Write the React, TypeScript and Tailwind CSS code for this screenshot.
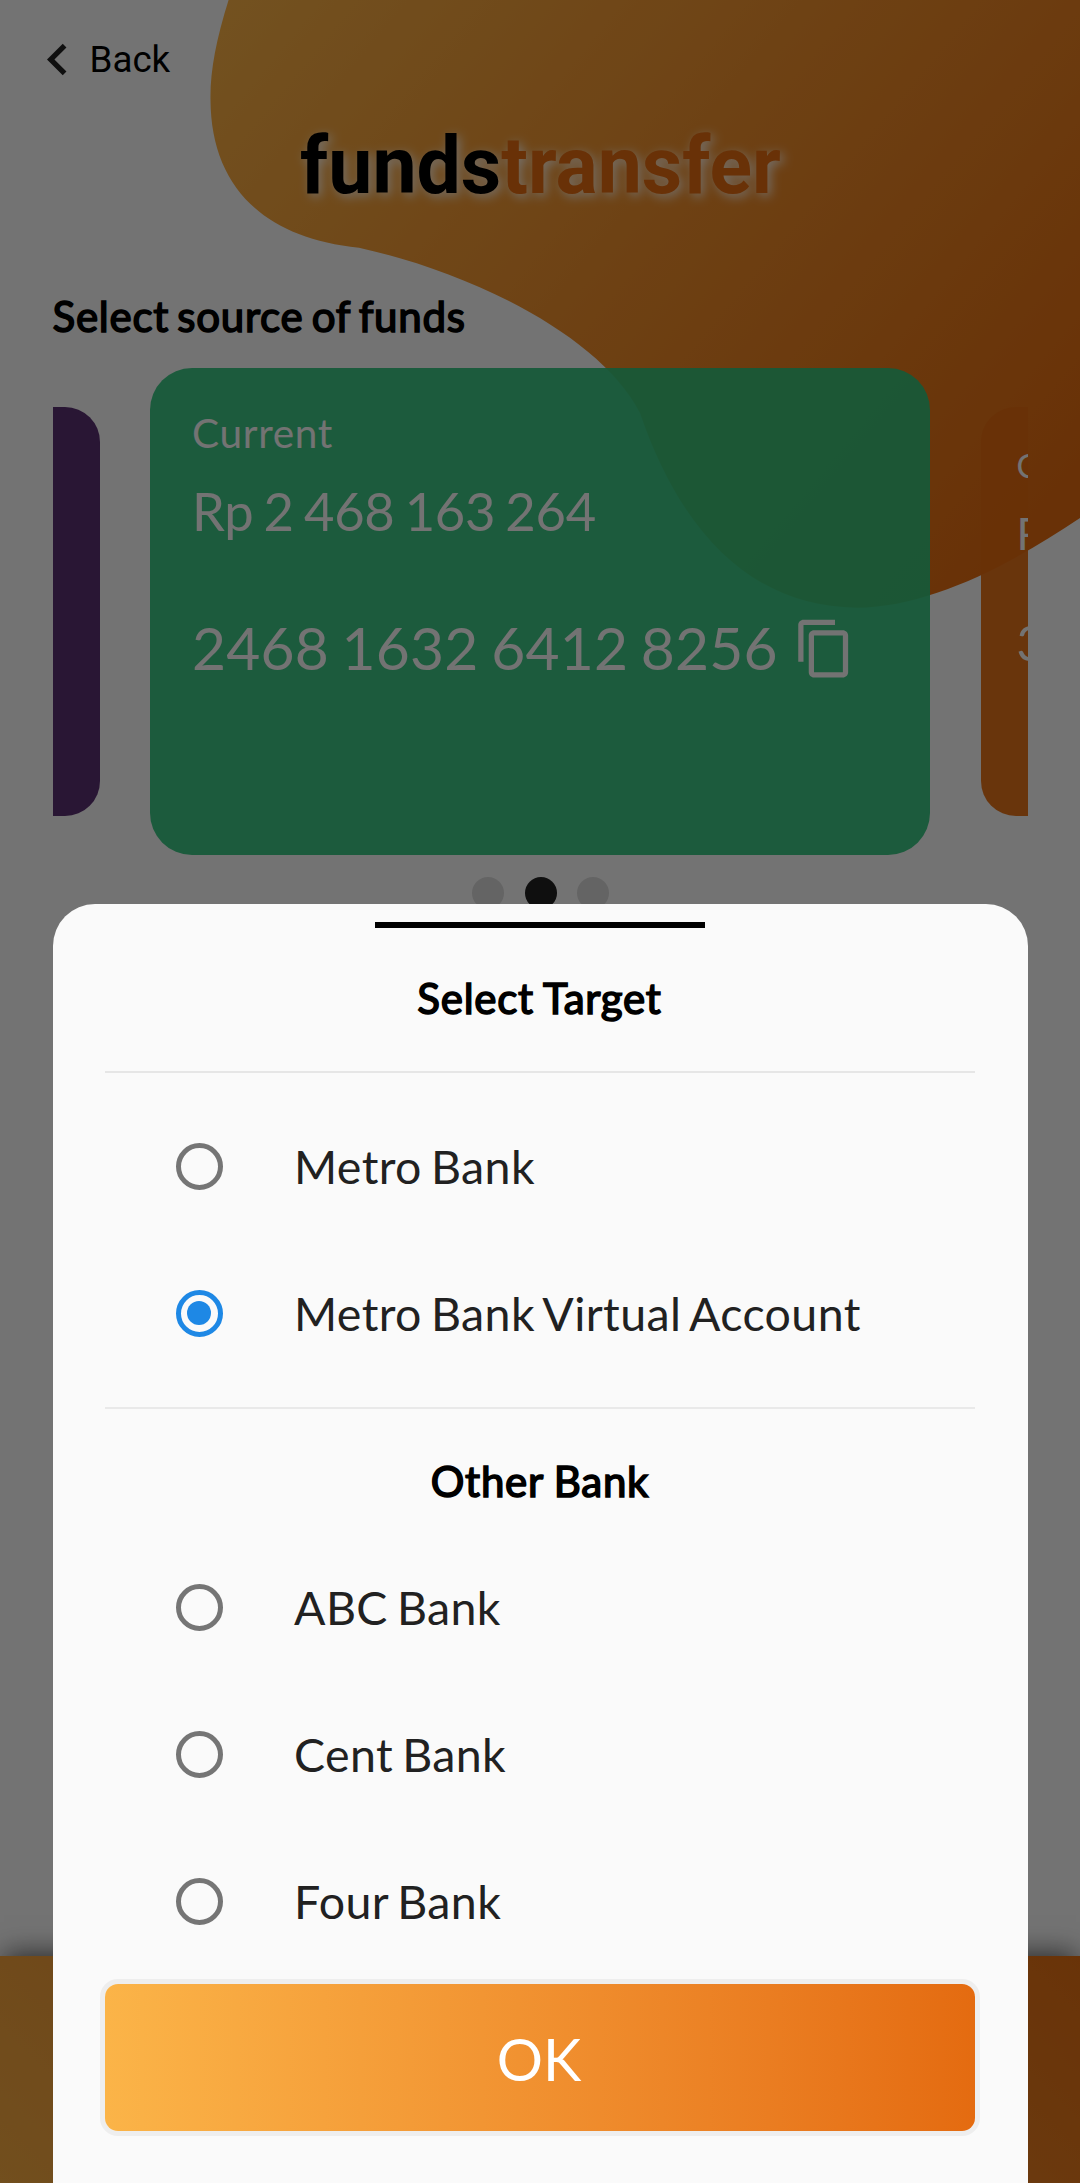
import React from "react";
import { MdContentCopy, MdKeyboardArrowLeft } from "react-icons/md";

function Backdrop() {
  return (
    <svg className="absolute left-0 top-0" width="1080" height="620" viewBox="0 0 1080 620">
      <defs>
        <linearGradient id="blob" gradientUnits="userSpaceOnUse" x1="220" y1="-50" x2="990" y2="590">
          <stop offset="0" stopColor="#fbb448" />
          <stop offset="1" stopColor="#e46b10" />
        </linearGradient>
      </defs>
      <path
        fill="url(#blob)"
        d="M228.6 0C216 40 210 72 210.5 100C211 185 262 238 359 247.7C470 272 600 335 640 413C680 530 750 607 857 607.7C930 607 1010 565 1080 518V0Z"
      />
    </svg>
  );
}

function Radio({ checked }: { checked: boolean }) {
  return (
    <span
      className={
        checked
          ? "flex size-[47.5px] items-center justify-center rounded-full border-[5.25px] border-[#1e88e5]"
          : "flex size-[47.5px] items-center justify-center rounded-full border-[5.25px] border-[#757575]"
      }
    >
      {checked && <span className="size-[24px] rounded-full bg-[#1e88e5]" />}
    </span>
  );
}

function Option({ label, checked = false }: { label: string; checked?: boolean }) {
  return (
    <div className="flex h-[147px] items-center pl-[70.5px]">
      <Radio checked={checked} />
      <span className="ml-[71px] whitespace-nowrap text-[46.5px] leading-[56px] tracking-[0.4px] text-[#212121] [word-spacing:-3.2px]">
        {label}
      </span>
    </div>
  );
}

const boldTitle = "text-[42px] leading-[50px] tracking-[0.75px] text-black [-webkit-text-stroke:1.6px_black]";

export default function App() {
  return (
    <div className="relative h-[2183px] w-[1080px] overflow-hidden bg-[#fafafa] font-['Lato',sans-serif]">
      <Backdrop />

      <main className="relative flex h-full flex-col">
        <div className="flex items-center pl-[25.5px] pt-[27.5px] font-['Roboto',sans-serif]">
          <MdKeyboardArrowLeft className="size-[63px] text-black/87" />
          <span className="ml-px pt-px text-[36.75px] leading-[44px] text-black">Back</span>
        </div>

        <h1 className="mt-[29.3px] pl-px text-center font-['Roboto',sans-serif] text-[78.75px] font-bold leading-[92px] text-black [text-shadow:3px_3px_11px_rgba(255,255,255,0.85)]">
          funds<span className="text-[#e46b10]">transfer</span>
        </h1>

        <h2 className={"mt-[79.2px] pl-[52.5px] [word-spacing:-3.3px] " + boldTitle}>Select source of funds</h2>

        <div className="ml-[52.5px] mt-[27px] flex w-[975px] items-center justify-center gap-[50.5px] overflow-hidden">
          <div className="h-[409px] w-[655px] shrink-0 rounded-[35px] bg-[#5a3072]" />
          <div className="h-[487.5px] w-[780px] shrink-0 rounded-[42px] bg-[#2fc27c]/93 pl-[42px] pt-[41.5px] text-[#fafafa]">
            <div className="text-[40.5px] leading-[48px] tracking-[0.7px]">Current</div>
            <div className="mt-[21.5px] text-[52.5px] leading-[64px] tracking-[-0.3px] [word-spacing:-2.9px]">Rp 2 468 163 264</div>
            <div className="mt-[69.3px] flex h-[72px] items-center whitespace-nowrap text-[58.7px] leading-[72px] tracking-[0.2px] [word-spacing:-2.6px]">
              2468 1632 6412 8256
              <MdContentCopy className="ml-[15.5px] size-[63px]" />
            </div>
          </div>
          <div className="h-[409px] w-[655px] shrink-0 rounded-[35px] bg-[#e46b10]/95 pl-[36px] pt-[37.4px] text-[#fafafa]">
            <div className="text-[33px] leading-[40px]">C</div>
            <div className="mt-[21.5px] text-[44px] leading-[54px]">R</div>
            <div className="mt-[51.5px] text-[49px] leading-[60px]">3</div>
          </div>
        </div>

        <div className="mt-[21.5px] flex justify-center gap-[20.5px] pl-px">
          <span className="size-[32px] rounded-full bg-[#dadada]" />
          <span className="size-[32px] rounded-full bg-[#212121]" />
          <span className="size-[32px] rounded-full bg-[#dadada]" />
        </div>

        <div className="mt-auto h-[227.5px] bg-linear-45 from-[#f8ac42] to-[#e57013] shadow-[0_-6px_26px_-4px_rgba(0,0,0,0.65)]" />
      </main>

      <div className="absolute inset-0 bg-black/54" />

      <section className="absolute bottom-0 left-[52.5px] flex h-[1279.3px] w-[975px] flex-col rounded-t-[42px] bg-[#fafafa] px-[52.5px]">
        <div className="mt-[18.3px] h-[5.7px] w-[330px] self-center bg-black" />
        <h2 className={"mt-[45.3px] pr-px text-center [word-spacing:-1.2px] " + boldTitle}>Select Target</h2>
        <div className="mt-[48px] h-[2px] shrink-0 bg-[#e6e6e6]" />
        <div className="mt-[20px]">
          <Option label="Metro Bank" />
          <Option label="Metro Bank Virtual Account" checked />
        </div>
        <div className="mt-[20px] h-[2px] shrink-0 bg-[#e9e9e9]" />
        <h2 className={"mt-[47px] text-center [word-spacing:-1px] " + boldTitle}>Other Bank</h2>
        <div className="mt-[27.8px]">
          <Option label="ABC Bank" />
          <Option label="Cent Bank" />
          <Option label="Four Bank" />
        </div>
        <button className="mt-[9.3px] flex h-[146.8px] shrink-0 items-center justify-center rounded-[13px] bg-linear-to-r from-[#fbb448] to-[#e46b10] pr-[2px] pt-[3px] text-[57.75px] leading-[70px] text-white shadow-[0_0_0_5px_#eeeeee]">
          OK
        </button>
      </section>
    </div>
  );
}
